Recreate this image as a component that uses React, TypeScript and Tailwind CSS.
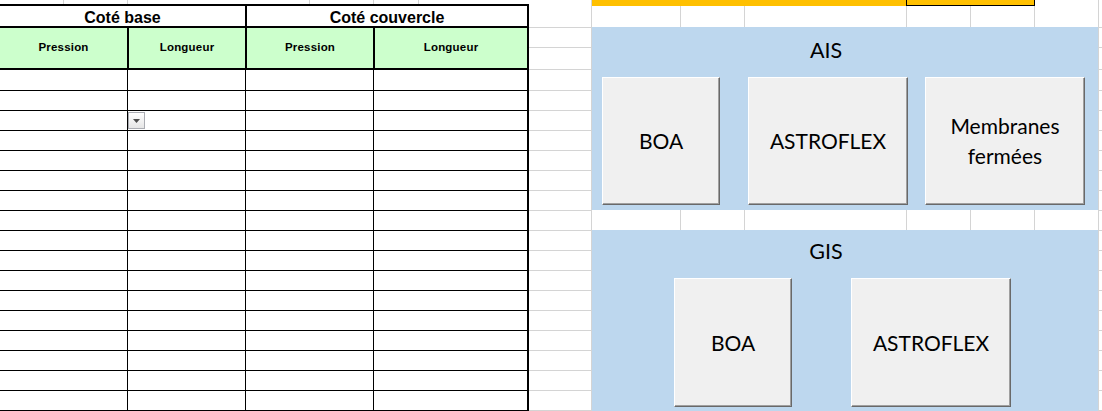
import React from 'react';

// spreadsheet row heights (px) for the plain grid columns
const sheetRows = [28, 20, 22, 21, ...Array(18).fill(20)];
const dataRows = [21, ...Array(17).fill(20)];

const SheetColumn: React.FC<{ className: string }> = ({ className }) => (
  <div className={`shrink-0 flex flex-col ${className}`}>
    {sheetRows.map((h, i) => (
      <div key={i} className="shrink-0 border-b border-[#d4d4d4]" style={{ height: h }} />
    ))}
  </div>
);

const SheetButton: React.FC<{ className: string; children: React.ReactNode }> = ({ className, children }) => (
  <div
    className={`shrink-0 flex items-center justify-center text-center bg-[#f0f0f0] border border-t-white border-l-white border-r-[#696969] border-b-[#696969] shadow-[inset_-1px_-1px_0_#a0a0a0] text-[21px] leading-[30px] text-black ${className}`}
  >
    {children}
  </div>
);

const Dropdown: React.FC = () => (
  <div className="mt-px w-[17px] h-[17px] border border-[#abadb3] bg-gradient-to-b from-white to-[#e6e6e6] flex items-center justify-center">
    <svg width="7" height="4" viewBox="0 0 7 4">
      <path d="M0 0h7L3.5 4z" fill="#4d4d4d" />
    </svg>
  </div>
);

const DataTable: React.FC = () => (
  <div className="w-[529px] shrink-0 flex flex-col font-['Liberation_Sans',Arial,sans-serif] text-black">
    {/* top sliver of the row above the table */}
    <div className="h-[4px] shrink-0 flex">
      <div className="w-[64px] border-r border-[#d4d4d4]" />
      <div className="w-[64px] border-r border-[#d4d4d4]" />
      <div className="w-[182px] border-r border-[#d4d4d4]" />
      <div className="w-[64px] border-r border-[#d4d4d4]" />
      <div className="w-[45px] border-r border-[#d4d4d4]" />
    </div>

    <div className="shrink-0 border-t-2 border-black">
      <div className="grid grid-cols-[247px_282px] h-[22px] border-b-2 border-black text-[16px] font-bold">
        <div className="border-r-2 border-black flex items-center justify-center">Coté base</div>
        <div className="border-r-2 border-black flex items-center justify-center">Coté couvercle</div>
      </div>

      <div className="grid grid-cols-[129px_118px_128px_154px] h-[42px] border-b-2 border-black bg-[#ccffcc] text-[11.5px] font-bold tracking-[0.2px]">
        <div className="border-r-2 border-black flex items-center justify-center">Pression</div>
        <div className="border-r-2 border-black flex items-center justify-center">Longueur</div>
        <div className="border-r-2 border-black flex items-center justify-center">Pression</div>
        <div className="border-r-2 border-black flex items-center justify-center">Longueur</div>
      </div>

      {dataRows.map((h, i) => (
        <div
          key={i}
          className="grid grid-cols-[128px_118px_128px_155px] border-b border-black shrink-0"
          style={{ height: h }}
        >
          <div className="border-r border-black" />
          <div className="border-r border-black">{i === 2 && <Dropdown />}</div>
          <div className="border-r border-black" />
          <div className="border-r-2 border-black" />
        </div>
      ))}
    </div>
  </div>
);

const GapRow: React.FC = () => (
  <div className="h-[20px] flex shrink-0">
    <div className="w-[89px] border-r border-[#d4d4d4]" />
    <div className="w-[64px] border-r border-[#d4d4d4]" />
    <div className="w-[162px] border-r border-[#d4d4d4]" />
    <div className="w-[64px] border-r border-[#d4d4d4]" />
    <div className="w-[64px] border-r border-[#d4d4d4]" />
  </div>
);

const ButtonBoard: React.FC = () => (
  <div className="w-[506px] shrink-0 flex flex-col font-['Lato',sans-serif]">
    {/* highlighted strip + header row */}
    <div className="h-[6px] flex shrink-0">
      <div className="w-[314px] bg-[#ffc000]" />
      <div className="w-[129px] bg-[#ffc000] border-x border-b border-black" />
    </div>
    <div className="h-[21px] flex shrink-0">
      <div className="w-[89px] border-r border-[#d4d4d4]" />
      <div className="w-[64px] border-r border-[#d4d4d4]" />
      <div className="w-[162px] border-r border-[#d4d4d4]" />
      <div className="w-[64px] border-r border-[#d4d4d4]" />
      <div className="w-[64px] border-r border-[#d4d4d4]" />
    </div>

    {/* AIS */}
    <div className="h-[183px] shrink-0 bg-[#bdd7ee] flex flex-col">
      <div className="w-[468px] h-[50px] pt-[8px] text-center text-[21.5px] leading-[30px] text-black">AIS</div>
      <div className="flex pl-[10px]">
        <SheetButton className="w-[118px] h-[128px]">BOA</SheetButton>
        <SheetButton className="ml-[28px] w-[160px] h-[128px]">ASTROFLEX</SheetButton>
        <SheetButton className="ml-[17px] w-[160px] h-[128px]">
          Membranes
          <br />
          fermées
        </SheetButton>
      </div>
    </div>

    <GapRow />

    {/* GIS */}
    <div className="h-[190px] shrink-0 bg-[#bdd7ee] flex flex-col">
      <div className="w-[468px] h-[48px] pt-[6px] text-center text-[21.5px] leading-[30px] text-black">GIS</div>
      <div className="flex pl-[82px]">
        <SheetButton className="w-[118px] h-[129px]">BOA</SheetButton>
        <SheetButton className="ml-[59px] w-[160px] h-[129px]">ASTROFLEX</SheetButton>
      </div>
    </div>
  </div>
);

export default function App() {
  return (
    <div className="w-[1102px] h-[411px] overflow-hidden bg-white flex">
      <DataTable />
      <SheetColumn className="w-[63px] border-r border-[#d4d4d4]" />
      <ButtonBoard />
      <SheetColumn className="w-[4px] border-l border-[#d4d4d4]" />
    </div>
  );
}
